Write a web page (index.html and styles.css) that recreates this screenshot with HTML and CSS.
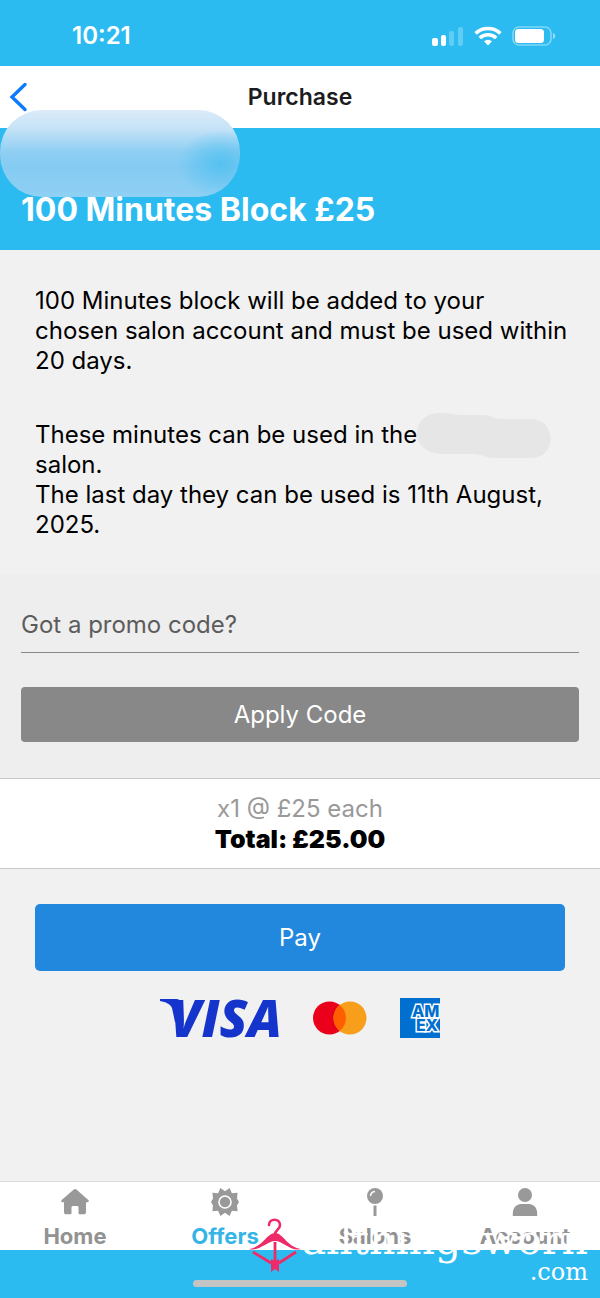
FILE: index.html
```html
<!DOCTYPE html>
<html lang="en">
<head>
    <meta charset="UTF-8">
    <meta name="viewport" content="width=device-width, initial-scale=1.0">
    <title>Purchase</title>
    <link rel="stylesheet" href="styles.css">
</head>
<body>
    <div class="status-bar">
        <span class="time">10:21</span>
        <div class="status-icons">
            <svg width="32" height="20" viewBox="0 0 32 20" fill="#fff">
                <rect x="0" y="12" width="6" height="8" rx="2"/>
                <rect x="9" y="9" width="5" height="11" rx="2"/>
                <rect x="17" y="5" width="5" height="15" rx="2" opacity=".25"/>
                <rect x="26" y="1" width="5" height="19" rx="2" opacity=".25"/>
            </svg>
            <svg width="28" height="20" viewBox="0 0 28 20" fill="none" stroke="#fff" stroke-width="3.6">
                <path d="M1.6 7.4a18 18 0 0 1 24.8 0"/>
                <path d="M5.8 12a12 12 0 0 1 16.4 0"/>
                <path d="M14 19.4l-4-4.2a6 6 0 0 1 8 0z" fill="#fff" stroke="none"/>
            </svg>
            <svg width="44" height="20" viewBox="0 0 44 20">
                <rect x="1" y="1" width="38" height="18" rx="6" fill="none" stroke="#fff" stroke-width="1.6" opacity=".4"/>
                <rect x="3" y="3" width="29" height="14" rx="3.5" fill="#fff"/>
                <path d="M41 7c3 1 3 5 0 6z" fill="#fff" opacity=".5"/>
            </svg>
        </div>
    </div>

    <header class="nav">
        <button type="button" class="back-btn" aria-label="Back">
            <svg width="20" height="30" viewBox="0 0 20 30" fill="none" stroke="#0a7aff" stroke-width="3.4" stroke-linecap="round" stroke-linejoin="miter">
                <path d="M17 2.500L4 15l13 12.500"/>
            </svg>
        </button>
        <h1>Purchase</h1>
    </header>

    <section class="hero">
        <div class="hero-blur"></div>
        <h2>100 Minutes Block £25</h2>
    </section>

    <main>
        <section class="info">
            <p>100 Minutes block will be added to your chosen salon account and must be used within 20 days.</p>
            <p>These minutes can be used in the <span class="hidden-name"><svg width="134" height="46" viewBox="0 0 134 46"><path d="M20 0c10-1 14 2 26 2h20c8 0 10 4 20 4h28c26 0 26 39 0 39H78c-10 0-12-4-22-4H26C-8 41-8 3 20 0z"/></svg></span> salon.<br>
            The last day they can be used is 11th August, 2025.</p>
        </section>

        <form class="promo">
            <input type="text" id="promo" placeholder="Got a promo code?" aria-label="Got a promo code?">
            <button type="button">Apply Code</button>
        </form>

        <section class="total">
            <div class="each">x1 @ £25 each</div>
            <div class="sum">Total: £25.00</div>
        </section>

        <section class="payment">
            <button type="button">Pay</button>
            <div class="cards">
                <svg width="120" height="42" viewBox="0 0 120 42" class="visa" role="img" aria-label="Visa">
                    <path d="M0 2h15c4 0 6 1 6 5l1 18h-7L12 11C10 7 6 5 0 4z"/>
                    <text x="10" y="40">VISA</text>
                </svg>
                <svg width="54" height="42" viewBox="0 0 54 42" role="img" aria-label="Mastercard">
                    <circle cx="16.500" cy="21" r="16.500" fill="#eb001b"/>
                    <circle cx="37" cy="21" r="16.500" fill="#f79e1b"/>
                    <path d="M26.750 8.100a16.500 16.500 0 0 1 0 25.800a16.500 16.500 0 0 1 0-25.800z" fill="#ff5f00"/>
                </svg>
                <svg width="40" height="42" viewBox="0 0 40 42" class="amex" role="img" aria-label="American Express">
                    <rect y="1" width="40" height="40"/>
                    <text x="12" y="20">AM</text>
                    <text x="16" y="34">EX</text>
                </svg>
            </div>
        </section>
    </main>

    <footer>
        <nav class="tabs">
            <a href="#home">
                <svg width="30" height="30" viewBox="0 0 30 30" fill="#999">
                    <path d="M13.800 2.600a2 2 0 0 1 2.600 0L28.300 13c1 1 .5 2.200-.8 2.200H26V25c0 1.500-.8 2.300-2.200 2.300h-4c-.8 0-1.300-.5-1.300-1.300v-5.500c0-1-.5-1.500-1.500-1.500h-4c-1 0-1.500.5-1.500 1.500V26c0 .8-.5 1.300-1.300 1.300h-4C4.800 27.300 4 26.500 4 25v-9.800H2.500c-1.300 0-1.800-1.200-.8-2.200z"/>
                </svg>
                Home
            </a>
            <a href="#offers" class="active">
                <svg width="30" height="30" viewBox="0 0 30 30">
                    <path d="M10.400 1L15 4.300 19.600 1l2.300 5.200 5.700-.5-.6 5.700L29 15l-2 3.600.6 5.700-5.700-.5-2.300 5.200L15 25.700 10.400 29l-2.300-5.200-5.700.5.600-5.700L1 15l2-3.600-.6-5.700 5.700.5z" fill="#999"/>
                    <circle cx="15" cy="15" r="6" fill="#999" stroke="#fff" stroke-width="1.600"/>
                </svg>
                Offers
            </a>
            <a href="#salons">
                <svg width="30" height="30" viewBox="0 0 30 30">
                    <circle cx="15" cy="9" r="8" fill="#999"/>
                    <path d="M10.500 9a5 5 0 0 1 4.500-4.500" fill="none" stroke="#fff" stroke-width="1.500"/>
                    <path d="M13.500 18.500h3V29h-3z" fill="#999"/>
                </svg>
                Salons
            </a>
            <a href="#account">
                <svg width="30" height="30" viewBox="0 0 30 30" fill="#999">
                    <circle cx="15" cy="8" r="7"/>
                    <path d="M2.800 29v-2.500c0-6 4-9.500 8.200-9.500h8c4.200 0 8.200 3.500 8.200 9.500V29z"/>
                </svg>
                Account
            </a>
        </nav>
        <div class="home-area"><div class="home-indicator"></div></div>

        <div class="watermark">
            <svg width="54" height="56" viewBox="0 0 54 56">
                <path d="M21 7c0-7 11-7 11 0 0 5-5 4-5 10" fill="none" stroke="#ee2a68" stroke-width="2.600" stroke-linecap="round"/>
                <path d="M27 15c8 0 12 14 26 16-10 3-18-8-26-8S11 34 1 31c14-2 18-16 26-16z" fill="#ee2a68"/>
                <path d="M27 24v20M5 34l18 11M48 34L31 45" fill="none" stroke="#ee2a68" stroke-width="2.800"/>
                <path d="M23 41l4 2 4-2v13l-4-3-4 3z" fill="#ee2a68"/>
            </svg>
            <div class="watermark-text">
                <div class="brand">allthingsworn</div>
                <div class="dotcom">.com</div>
            </div>
        </div>
    </footer>
</body>
</html>
```

FILE: styles.css
```css
* {
    box-sizing: border-box;
}
body {
    font-family: Inter, "Liberation Sans", sans-serif;
    font-size: 24px;
    line-height: 30px;
    margin: 0;
    min-height: 100vh;
    display: flex;
    flex-direction: column;
    background-color: #f1f1f1;
    color: #000;
}
h1, h2, p {
    margin: 0;
}
svg {
    display: block;
}
button {
    font: inherit;
    border: none;
    cursor: pointer;
}
.status-bar {
    height: 66px;
    padding: 6px 44px 0 72px;
    display: flex;
    justify-content: space-between;
    align-items: center;
    background-color: #2cbbf0;
    color: #fff;
}
.time {
    font-weight: 600;
}
.status-icons {
    display: flex;
    gap: 10px;
}
.nav {
    height: 62px;
    padding: 0 8px;
    display: grid;
    grid-template-columns: 30px 1fr 30px;
    align-items: center;
    background-color: #fff;
}
.nav h1 {
    font-size: 23px;
    font-weight: 600;
    text-align: center;
    color: #1c1c1e;
}
.back-btn {
    padding: 0;
    background: none;
}
.back-btn svg {
    margin-right: auto;
}
.hero {
    position: relative;
    padding: 62px 21px 20px;
    background-color: #2cbbf0;
    color: #fff;
}
.hero h2 {
    position: relative;
    font-size: 32px;
    line-height: 40px;
    font-weight: 700;
}
.hero-blur {
    position: absolute;
    left: 0;
    top: -18px;
    width: 240px;
    height: 87px;
    border-radius: 42px;
    background: radial-gradient(44px 34px at 92% 62%, rgba(80, 192, 240, 0.9), rgba(80, 192, 240, 0)), linear-gradient(#dcebf9 0%, #c4e2f7 22%, #8fcff3 48%, #85cbf2 65%, #8fd0f4 100%);
}
main {
    flex: 1;
}
.info {
    padding: 36px 30px 34px 35px;
}
.info p + p {
    margin-top: 44px;
}
.hidden-name {
    display: inline-block;
    height: 30px;
    margin: -8px 0 -8px -7px;
    vertical-align: middle;
}
.hidden-name svg {
    margin-top: -8px;
    fill: #e6e6e6;
}
.promo {
    padding: 22px 21px 36px;
    display: flex;
    flex-direction: column;
    gap: 34px;
    background-color: #eee;
}
.promo input {
    font: inherit;
    height: 57px;
    padding: 0;
    border: none;
    border-bottom: 1px solid #85888d;
    border-radius: 0;
    outline: none;
    background: none;
}
.promo input::placeholder {
    color: #5c5c5c;
    opacity: 1;
}
.promo button {
    height: 55px;
    border-radius: 4px;
    background-color: #888;
    color: #fff;
}
.total {
    padding: 15px 20px 14px;
    border-top: 1px solid #c8c8c8;
    border-bottom: 1px solid #c8c8c8;
    background-color: #fff;
    text-align: center;
}
.each {
    color: #999;
}
.sum {
    font-size: 25px;
    font-weight: 900;
}
.payment {
    padding: 35px;
}
.payment button {
    width: 100%;
    height: 67px;
    border-radius: 5px;
    background-color: #2188dd;
    color: #fff;
}
.cards {
    margin-top: 26px;
    display: flex;
    justify-content: center;
    gap: 33px;
}
.visa {
    overflow: visible;
    fill: #1434cb;
    font: italic 800 51px "Open Sans", sans-serif;
}
.amex rect {
    fill: #006fcf;
}
.amex text {
    font: 800 16px Inter, sans-serif;
    fill: #006fcf;
    stroke: #fff;
    stroke-width: 3px;
    paint-order: stroke;
}
footer {
    position: relative;
}
.tabs {
    height: 69px;
    padding-top: 5px;
    display: grid;
    grid-template-columns: repeat(4, 1fr);
    border-top: 1px solid #ddd;
    background-color: #fff;
}
.tabs a {
    display: flex;
    flex-direction: column;
    align-items: center;
    gap: 4px;
    font-size: 22px;
    font-weight: 700;
    text-decoration: none;
    color: #929292;
}
.tabs .active {
    color: #35b5e5;
}
.home-area {
    height: 48px;
    padding-top: 30px;
    background-color: #2cbbf0;
}
.home-indicator {
    width: 214px;
    height: 7px;
    margin: 0 auto;
    border-radius: 4px;
    background-color: #c4c4c4;
}
.watermark {
    position: absolute;
    right: 12px;
    bottom: 16px;
    display: flex;
    color: #fff;
    text-align: right;
}
.watermark-text {
    font-family: "DejaVu Serif", serif;
}
.brand {
    font-size: 41px;
    line-height: 44px;
}
.dotcom {
    font-size: 24px;
    line-height: 20px;
}
```
